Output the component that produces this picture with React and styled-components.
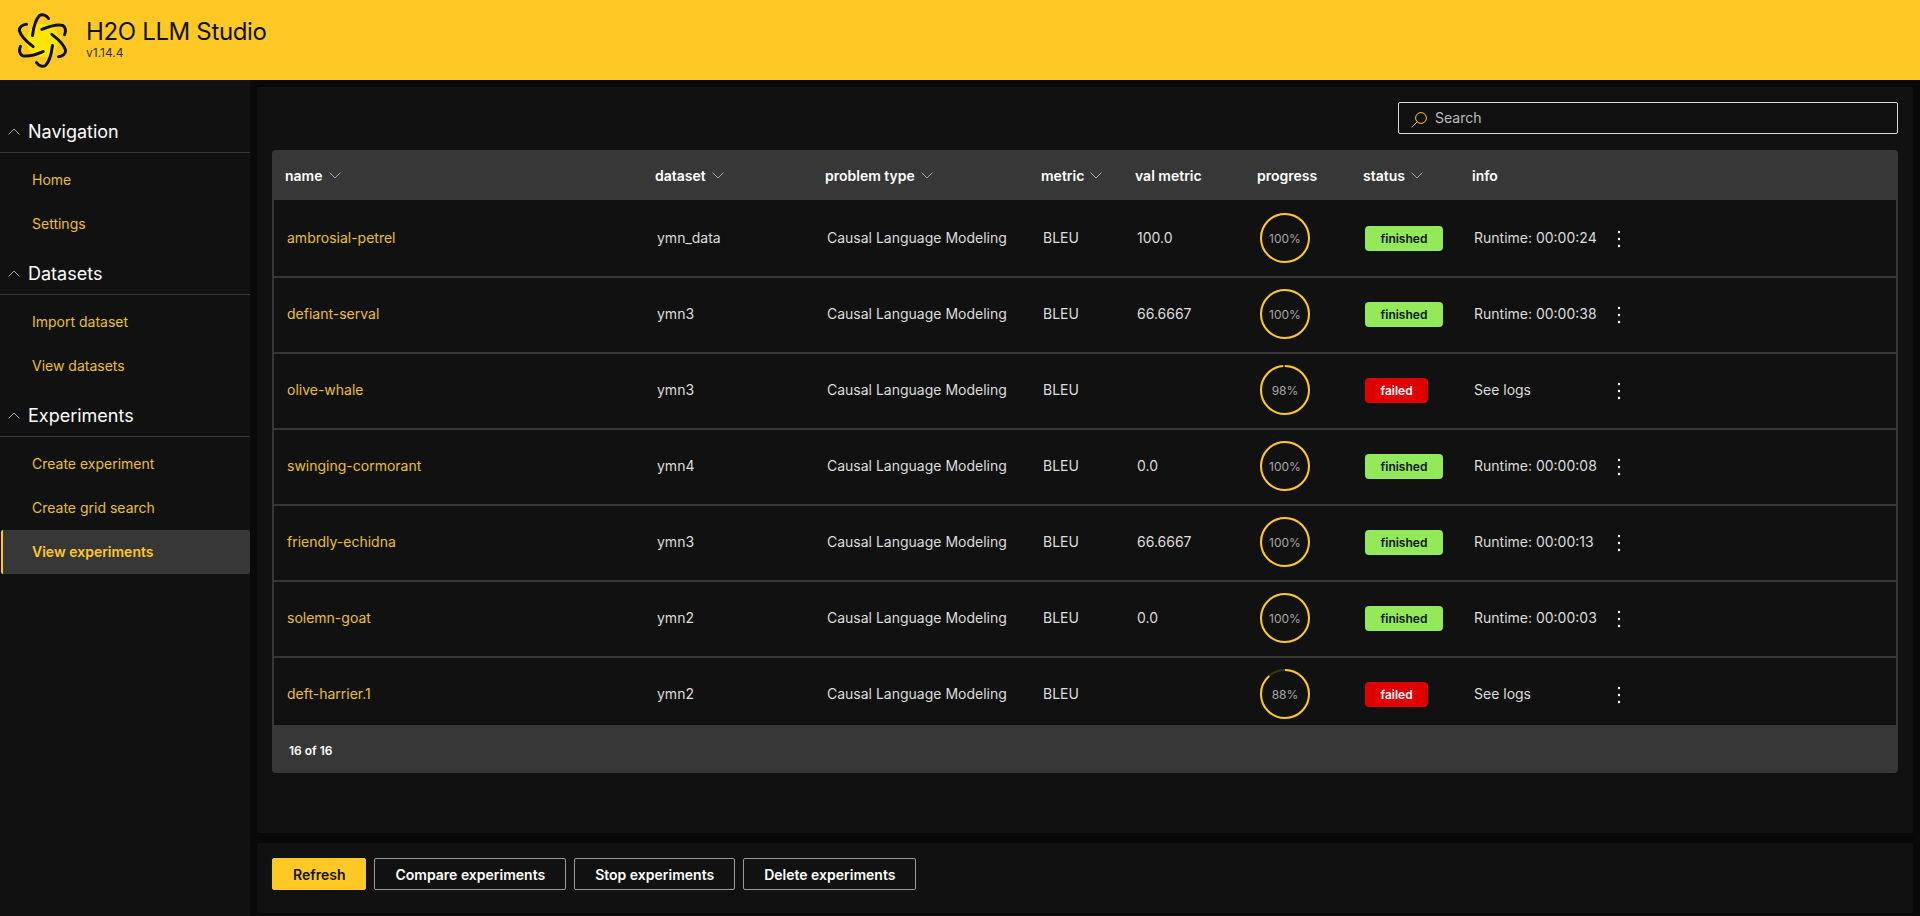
import React from "react";
import styled, { createGlobalStyle } from "styled-components";

const GlobalStyle = createGlobalStyle`
  * {
    box-sizing: border-box;
  }
  html,
  body {
    margin: 0;
    height: 100%;
    background: #0a0a0a;
    font-family: Inter, "Liberation Sans", sans-serif;
  }
`;

const navGroups = [
  { title: "Navigation", items: ["Home", "Settings"] },
  { title: "Datasets", items: ["Import dataset", "View datasets"] },
  {
    title: "Experiments",
    items: ["Create experiment", "Create grid search", "View experiments"],
  },
];

const columns = [
  { label: "name", sort: true },
  { label: "dataset", sort: true },
  { label: "problem type", sort: true },
  { label: "metric", sort: true },
  { label: "val metric" },
  { label: "progress" },
  { label: "status", sort: true },
  { label: "info" },
];

const rows = [
  ["ambrosial-petrel", "ymn_data", "100.0", 100, "finished", "Runtime: 00:00:24"],
  ["defiant-serval", "ymn3", "66.6667", 100, "finished", "Runtime: 00:00:38"],
  ["olive-whale", "ymn3", "", 98, "failed", "See logs"],
  ["swinging-cormorant", "ymn4", "0.0", 100, "finished", "Runtime: 00:00:08"],
  ["friendly-echidna", "ymn3", "66.6667", 100, "finished", "Runtime: 00:00:13"],
  ["solemn-goat", "ymn2", "0.0", 100, "finished", "Runtime: 00:00:03"],
  ["deft-harrier.1", "ymn2", "", 88, "failed", "See logs"],
];

const GRID = "370px 170px 216px 94px 122px 106px 109px 1fr";

const Page = styled.div`
  width: 100%;
  height: 916px;
  display: grid;
  grid-template-rows: 80px 1fr;
  grid-template-columns: 250px 1fr;
  overflow: hidden;
`;

const Header = styled.header`
  grid-column: 1 / 3;
  background: #fec925;
  display: flex;
  align-items: center;
  padding-left: 12px;
  gap: 13px;
  color: #111;
`;

const Title = styled.div`
  font-size: 24px;
  line-height: 28px;
  letter-spacing: -0.35px;
  margin-top: -2px;
`;

const Version = styled.div`
  font-size: 12px;
  line-height: 14px;
  color: #333;
`;

const Sidebar = styled.nav`
  background: #111;
  padding-top: 30px;
`;

const Group = styled.div`
  margin-bottom: 6px;
`;

const GroupHeader = styled.div`
  height: 43px;
  border-bottom: 1px solid #373737;
  display: flex;
  align-items: center;
  gap: 8px;
  padding-left: 8px;
  margin-bottom: 5px;
  color: #fff;
  font-size: 18px;
`;

const NavItem = styled.div`
  height: 44px;
  display: flex;
  align-items: center;
  margin-left: 1px;
  padding-left: ${(p) => (p.$active ? "29px" : "31px")};
  padding-bottom: 2px;
  font-size: 14px;
  font-weight: ${(p) => (p.$active ? 600 : 400)};
  color: ${(p) => (p.$active ? "#fec925" : "#e9c02a")};
  background: ${(p) => (p.$active ? "#373737" : "transparent")};
  border-left: ${(p) => (p.$active ? "2px solid #fec925" : "none")};
  border-radius: 2px;
`;

const Main = styled.main`
  display: flex;
  flex-direction: column;
  gap: 10px;
  padding: 7px 7px 4px 7px;
  min-width: 0;
`;

const Card = styled.section`
  background: #111;
  border-radius: 2px;
  box-shadow: 0 0 6px rgba(0, 0, 0, 0.4);
`;

const TableCard = styled(Card)`
  height: 746px;
  padding: 15px 15px 0 15px;
`;

const SearchRow = styled.div`
  display: flex;
  justify-content: flex-end;
  margin-bottom: 16px;
`;

const SearchBox = styled.label`
  width: 500px;
  height: 32px;
  border: 1px solid #ddd;
  border-radius: 2px;
  display: flex;
  align-items: center;
  gap: 8px;
  padding-left: 12px;
  svg {
    margin-top: 4px;
  }
`;

const SearchInput = styled.input`
  flex: 1;
  background: transparent;
  border: none;
  outline: none;
  padding: 0 0 2px;
  color: #fff;
  font-family: inherit;
  font-size: 14px;
  &::placeholder {
    color: #bdbdbd;
    opacity: 1;
  }
`;

const Table = styled.div`
  background: #373737;
  border-radius: 4px;
  overflow: hidden;
`;

const HeadRow = styled.div`
  height: 50px;
  display: grid;
  grid-template-columns: ${GRID};
  align-items: center;
  padding-left: 13px;
`;

const HeadCell = styled.div`
  display: flex;
  align-items: center;
  gap: 6px;
  color: #fff;
  font-size: 14px;
  font-weight: 600;
`;

const Rows = styled.div`
  height: 525px;
  margin: 0 2px;
  padding-top: 2px;
  background: #111;
  overflow: hidden;
`;

const Row = styled.div`
  height: 76px;
  display: grid;
  grid-template-columns: ${GRID};
  align-items: center;
  padding: 0 0 2px 13px;
  margin-left: -2px;
  margin-right: -2px;
  border-bottom: 2px solid #373737;
  color: #ddd;
  font-size: 14px;
`;

const Cell = styled.div`
  padding-left: 2px;
  display: flex;
  align-items: center;
`;

const TextCell = styled(Cell)`
  padding-bottom: 1px;
`;

const NameLink = styled(TextCell)`
  color: #e9c02a;
`;

const Ring = styled.div`
  position: relative;
  width: 50px;
  height: 50px;
  margin-left: 1px;
  display: flex;
  align-items: center;
  justify-content: center;
  color: #a6a6a6;
  font-size: 12px;
  svg {
    position: absolute;
    inset: 0;
  }
`;

const Badge = styled.span`
  height: 25px;
  padding: 0 15.5px;
  display: inline-flex;
  align-items: center;
  border-radius: 4px;
  font-size: 12px;
  font-weight: 600;
  background: ${(p) => (p.$failed ? "#de0000" : "#92e95a")};
  color: ${(p) => (p.$failed ? "#fff" : "#111")};
`;

const InfoCell = styled(TextCell)`
  width: 149px;
  justify-content: space-between;
  svg {
    margin-top: 2px;
  }
`;

const Footer = styled.div`
  height: 48px;
  display: flex;
  align-items: center;
  padding: 3px 0 0 17px;
  color: #fff;
  font-size: 12px;
  font-weight: 600;
`;

const ActionCard = styled(Card)`
  height: 70px;
  padding: 15px;
  display: flex;
  gap: 8px;
`;

const Button = styled.button`
  height: 32px;
  padding: 0 20px;
  border-radius: 2px;
  border: 1px solid ${(p) => (p.$primary ? "#fec925" : "#9a9a9a")};
  background: ${(p) => (p.$primary ? "#fec925" : "#111")};
  color: ${(p) => (p.$primary ? "#111" : "#fff")};
  font-family: inherit;
  font-size: 14px;
  font-weight: 600;
`;

const Logo = () => (
  <svg width="61" height="61" viewBox="-30.5 -30.5 61 61">
    <circle r="16.5" fill="#ffe600" />
    {[0, 60, 120, 180, 240, 300].map((angle) => (
      <path
        key={angle}
        transform={`rotate(${angle})`}
        d="M-10 -5C-9 -13 -7 -21 -3 -25C0 -27 4 -25 6 -22"
        fill="none"
        stroke="#111"
        strokeWidth="3"
        strokeLinecap="round"
      />
    ))}
  </svg>
);

const Chevron = ({ up, color = "#a6a6a6" }) => (
  <svg width="12" height="7" viewBox="0 0 12 7">
    <path
      d={up ? "M0.5 6.5L6 1L11.5 6.5" : "M0.5 0.5L6 6L11.5 0.5"}
      fill="none"
      stroke={color}
      strokeWidth="1"
    />
  </svg>
);

const SearchIcon = () => (
  <svg width="16" height="16" viewBox="0 0 16 16">
    <circle cx="10" cy="6" r="5.4" fill="none" stroke="#fec925" strokeWidth="1" />
    <path d="M6.2 9.8L0.6 15.4" stroke="#fec925" strokeWidth="1" />
  </svg>
);

const MoreIcon = () => (
  <svg width="4" height="18" viewBox="0 0 4 18">
    <circle cx="2" cy="2" r="1.2" fill="#fff" />
    <circle cx="2" cy="9" r="1.2" fill="#fff" />
    <circle cx="2" cy="16" r="1.2" fill="#fff" />
  </svg>
);

const ProgressRing = ({ value }) => {
  const r = 24;
  const length = 2 * Math.PI * r;
  return (
    <Ring>
      <svg width="50" height="50" viewBox="0 0 50 50">
        <circle cx="25" cy="25" r={r} fill="none" stroke="#3a3214" strokeWidth="2" />
        <circle
          cx="25"
          cy="25"
          r={r}
          fill="none"
          stroke="#fec925"
          strokeWidth="2"
          strokeDasharray={`${(length * value) / 100} ${length}`}
          transform="rotate(-90 25 25)"
        />
      </svg>
      {value}%
    </Ring>
  );
};

const App = () => {
  return (
    <Page>
      <GlobalStyle />
      <Header>
        <Logo />
        <div>
          <Title>H2O LLM Studio</Title>
          <Version>v1.14.4</Version>
        </div>
      </Header>
      <Sidebar>
        {navGroups.map((group) => (
          <Group key={group.title}>
            <GroupHeader>
              <Chevron up />
              {group.title}
            </GroupHeader>
            {group.items.map((item) => (
              <NavItem key={item} $active={item === "View experiments"}>
                {item}
              </NavItem>
            ))}
          </Group>
        ))}
      </Sidebar>
      <Main>
        <TableCard>
          <SearchRow>
            <SearchBox>
              <SearchIcon />
              <SearchInput placeholder="Search" />
            </SearchBox>
          </SearchRow>
          <Table>
            <HeadRow>
              {columns.map((col) => (
                <HeadCell key={col.label}>
                  {col.label}
                  {col.sort && <Chevron />}
                </HeadCell>
              ))}
            </HeadRow>
            <Rows>
              {rows.map(([name, dataset, val, progress, status, info]) => (
                <Row key={name}>
                  <NameLink>{name}</NameLink>
                  <TextCell>{dataset}</TextCell>
                  <TextCell>Causal Language Modeling</TextCell>
                  <TextCell>BLEU</TextCell>
                  <TextCell>{val}</TextCell>
                  <Cell>
                    <ProgressRing value={progress} />
                  </Cell>
                  <Cell>
                    <Badge $failed={status === "failed"}>{status}</Badge>
                  </Cell>
                  <InfoCell>
                    {info}
                    <MoreIcon />
                  </InfoCell>
                </Row>
              ))}
            </Rows>
            <Footer>16 of 16</Footer>
          </Table>
        </TableCard>
        <ActionCard>
          <Button $primary>Refresh</Button>
          <Button>Compare experiments</Button>
          <Button>Stop experiments</Button>
          <Button>Delete experiments</Button>
        </ActionCard>
      </Main>
    </Page>
  );
};

export default App;
